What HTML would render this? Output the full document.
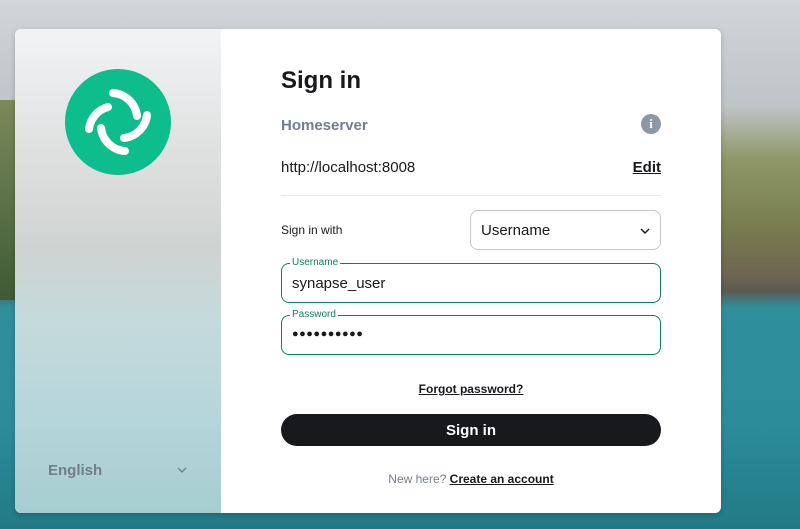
<!DOCTYPE html>
<html><head><style>
*{margin:0;padding:0;box-sizing:border-box}
body{width:800px;height:529px;overflow:hidden;font-family:"Liberation Sans",sans-serif;position:relative;
background:linear-gradient(180deg,#d2d5d9 0%,#bfc4c8 20%,#8f9868 30%,#7a7f4e 42%,#6e6553 52%,#5d5a52 55%,#2f8f9b 58%,#2c8d99 80%,#227a86 100%);}
.bgl{position:absolute;left:0;top:100px;width:30px;height:200px;background:linear-gradient(180deg,#7b8a5a,#3e5b35);}
.card{position:absolute;left:15px;top:29px;width:706px;height:484px;border-radius:6px;overflow:hidden;background:#fff;box-shadow:0 2px 6px rgba(0,0,0,.2)}
.left{position:absolute;left:0;top:0;width:206px;height:484px;background:linear-gradient(180deg,#f1f3f5 0%,#dfe1e1 25%,#cfd3d1 45%,#c5dadc 60%,#b5d6da 80%,#a6cdd0 100%)}
.right{position:absolute;left:266px;top:0;width:380px}
h1{position:absolute;top:38px;font-size:24px;font-weight:bold;color:#17191c}
.t{position:absolute;color:#17191c}
.field{position:absolute;left:0;width:380px;height:40px;border:1px solid #0d7e61;border-radius:8px}
.lab{position:absolute;left:8px;top:-7px;background:#fff;font-size:10px;color:#0d7e61;padding:0 2px}
</style></head><body>
<div class="bgl"></div>
<div class="card">
 <div class="left">
  <svg style="position:absolute;left:50px;top:40px" width="106" height="106" viewBox="0 0 106 106">
   <circle cx="53" cy="53" r="53" fill="#0dbd8b"/>
   <g fill="none" stroke="#fff" stroke-width="8" stroke-linecap="round">
    <path d="M48 24 A26 26 0 0 1 72 47"/>
    <path d="M43 38 A26 26 0 0 0 24 60"/>
    <path d="M36 59 A26 26 0 0 0 60 82"/>
    <path d="M82 46 A26 26 0 0 1 59 69"/>
   </g>
  </svg>
  <div style="position:absolute;left:33px;top:433px;font-size:15px;font-weight:bold;color:#737d8c">English</div>
  <svg style="position:absolute;left:162px;top:437px" width="10" height="8"><path d="M1 2 L5 6 L9 2" stroke="#737d8c" stroke-width="1.3" fill="none"/></svg>
 </div>
 <div class="right">
  <h1>Sign in</h1>
  <div class="t" style="top:88px;font-size:15px;font-weight:bold;color:#737d8c">Homeserver</div>
  <div style="position:absolute;left:360px;top:85px;width:20px;height:20px;border-radius:50%;background:#8d97a5;color:#fff;font-size:13px;font-weight:bold;text-align:center;line-height:20px;font-family:'Liberation Serif',serif">i</div>
  <div class="t" style="top:130px;font-size:15px">http://localhost:8008</div>
  <div class="t" style="top:130px;right:0;font-size:15px;font-weight:bold;text-decoration:underline">Edit</div>
  <div style="position:absolute;top:166px;left:0;width:380px;height:1px;background:#e3e8f0"></div>
  <div class="t" style="top:194px;font-size:12px">Sign in with</div>
  <div style="position:absolute;left:189px;top:181px;width:191px;height:40px;border:1px solid #c1c6cd;border-radius:8px">
   <div class="t" style="left:10px;top:11px;font-size:15px">Username</div>
   <svg style="position:absolute;right:10px;top:16px" width="10" height="8"><path d="M1 2 L5 6 L9 2" stroke="#17191c" stroke-width="1.5" fill="none"/></svg>
  </div>
  <div class="field" style="top:234px"><span class="lab">Username</span><div class="t" style="left:10px;top:11px;font-size:15px">synapse_user</div></div>
  <div class="field" style="top:286px"><span class="lab">Password</span><div class="t" style="left:10px;top:12px;font-size:11px;letter-spacing:0.5px">●●●●●●●●●●</div></div>
  <div class="t" style="top:353px;width:380px;text-align:center;font-size:12px;font-weight:bold;text-decoration:underline">Forgot password?</div>
  <div style="position:absolute;top:385px;left:0;width:380px;height:32px;border-radius:16px;background:#17191c;color:#fff;text-align:center;line-height:34px;font-size:15px;font-weight:bold">Sign in</div>
  <div class="t" style="top:443px;width:380px;text-align:center;font-size:12px;color:#737d8c">New here? <b style="color:#17191c;text-decoration:underline">Create an account</b></div>
 </div>
</div>
</body></html>
